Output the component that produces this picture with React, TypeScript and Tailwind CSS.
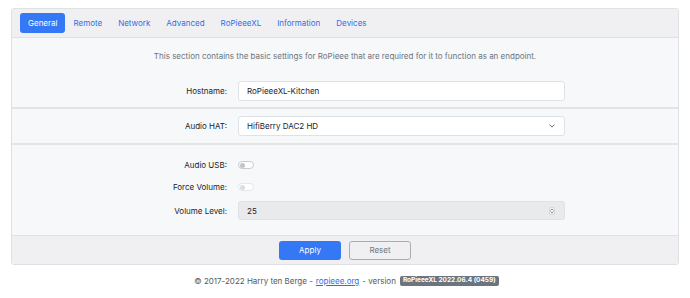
import React from 'react';

const tabs = ['General', 'Remote', 'Network', 'Advanced', 'RoPieeeXL', 'Information', 'Devices'];

function Toggle({ disabled }: { disabled?: boolean }) {
    return (
        <div
            className={`w-[16px] h-[8px] rounded-full border bg-white flex items-center px-[1px] ${disabled ? 'border-[#e6e7ea]' : 'border-[#c9ccd1]'}`}
        >
            <div className={`w-[5px] h-[5px] rounded-full ${disabled ? 'bg-[#dcdde0]' : 'bg-[#c2c4c8]'}`} />
        </div>
    );
}

function Row({ label, children }: { label: string; children: React.ReactNode }) {
    return (
        <div className="flex items-center">
            <div className="w-[226px] pr-[11px] text-right text-[#212529]">{label}</div>
            <div className="w-[327px]">{children}</div>
        </div>
    );
}

export default function App() {
    return (
        <div className="w-[690px] h-[298px] bg-white pt-[8px] px-[11px] text-[8px] font-['Inter',sans-serif]">
            <div className="w-[668px] border border-[#dfe1e4] rounded-[3px] overflow-hidden">
                {/* tabs */}
                <div className="h-[29px] bg-[#f0f0f2] border-b border-[#dfe1e4] flex items-center pl-[8px]">
                    {tabs.map((t, i) => (
                        <div
                            key={t}
                            className={`h-[20px] px-[8px] flex items-center rounded-[3px] ${i === 0 ? 'bg-[#3478f6] text-white' : 'text-[#2f6fe8]'}`}
                        >
                            {t}
                        </div>
                    ))}
                </div>

                {/* general */}
                <div className="bg-[#f7f8fa] h-[71px] border-b-2 border-[#e2e4e7] pt-[12px]">
                    <p className="text-center text-[#6c757d]">
                        This section contains the basic settings for RoPieee that are required for it to function as an endpoint.
                    </p>
                    <div className="mt-[19px]">
                        <Row label="Hostname:">
                            <div className="h-[20px] bg-white border border-[#dee2e6] rounded-[3px] flex items-center px-[8px] text-[#212529]">
                                RoPieeeXL-Kitchen
                            </div>
                        </Row>
                    </div>
                </div>

                {/* audio hat */}
                <div className="bg-[#f7f8fa] h-[36px] border-b-2 border-[#e2e4e7] flex items-center">
                    <Row label="Audio HAT:">
                        <div className="h-[20px] bg-white border border-[#dee2e6] rounded-[3px] flex items-center justify-between pl-[8px] pr-[9px] text-[#212529]">
                            <span>HifiBerry DAC2 HD</span>
                            <svg width="6" height="4" viewBox="0 0 8 5" fill="none" stroke="#666" strokeWidth="1.3" strokeLinecap="round">
                                <path d="M1 1l3 3 3-3" />
                            </svg>
                        </div>
                    </Row>
                </div>

                {/* audio */}
                <div className="bg-[#f7f8fa] h-[91px] border-b border-[#dfe1e4] pt-[11px] flex flex-col">
                    <div className="h-[18px] flex items-center">
                        <Row label="Audio USB:">
                            <Toggle />
                        </Row>
                    </div>
                    <div className="h-[18px] flex items-center mt-[4px]">
                        <Row label="Force Volume:">
                            <Toggle disabled />
                        </Row>
                    </div>
                    <div className="mt-[5px]">
                        <Row label="Volume Level:">
                            <div className="h-[19px] bg-[#e9eaec] border border-[#dee2e6] rounded-[3px] flex items-center justify-between pl-[8px] pr-[9px] text-[#212529]">
                                <span>25</span>
                                <svg width="6" height="8" viewBox="0 0 6 8" fill="none">
                                    <rect x="0.5" y="0.5" width="5" height="7" rx="1.5" fill="#f3f3f4" stroke="#c8cacd" strokeWidth="0.6" />
                                    <path d="M1.8 3.2L3 2l1.2 1.2M1.8 4.8L3 6l1.2-1.2" stroke="#666" strokeWidth="0.7" strokeLinecap="round" />
                                </svg>
                            </div>
                        </Row>
                    </div>
                </div>

                {/* buttons */}
                <div className="bg-[#f0f0f2] h-[28px] flex items-center justify-center gap-[8px]">
                    <button className="w-[62px] h-[19px] rounded-[3px] bg-[#3478f6] text-white text-[8px]">Apply</button>
                    <button className="w-[62px] h-[19px] rounded-[3px] border border-[#a9adb2] text-[#6c757d] text-[8px]">Reset</button>
                </div>
            </div>

            {/* footer */}
            <div className="mt-[10px] flex items-center justify-center text-[#555a60] gap-[3px] pl-[3px]">
                <span>© 2017-2022 Harry ten Berge -</span>
                <span className="text-[#2f6fe8] underline">ropieee.org</span>
                <span>- version</span>
                <span className="ml-[1px] bg-[#6c757d] text-white font-bold text-[6.5px] px-[3px] h-[10px] flex items-center rounded-[2px]">
                    RoPieeeXL 2022.06.4 (0459)
                </span>
            </div>
        </div>
    );
}
